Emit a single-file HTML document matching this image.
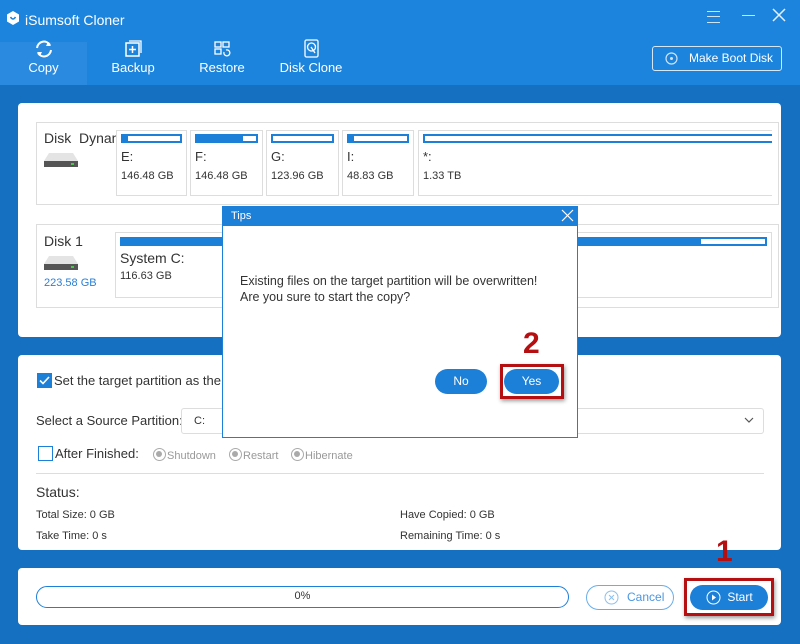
<!DOCTYPE html>
<html><head><meta charset="utf-8"><style>
*{margin:0;padding:0;box-sizing:border-box}
body{width:800px;height:644px;background:#1670c2;font-family:"Liberation Sans",sans-serif;position:relative;overflow:hidden;color:#333}
.abs{position:absolute}
.hdr{left:0;top:0;width:800px;height:85px;background:#1c84dc}
.tab{top:37px;height:48px;color:#fff;font-size:13px;text-align:center}
.panel{background:#fff;border-radius:4px}
.box{border:1px solid #ddd;background:#fff}
.pbox{border:1px solid #ddd;background:#fff}
.bar{border:2px solid #1c7fd8;height:9px;background:#fff}
.bar i{display:block;height:100%;background:#1c7fd8}
.lbl{font-size:13px;color:#333}
.sz{font-size:11px;color:#333}
.btn{background:#1c7fd8;color:#fff;border-radius:14px;font-size:12px;text-align:center}
.red{border:3px solid #b50f12;box-shadow:1px 2px 4px rgba(0,0,0,.4)}
.rnum{color:#b50f12;font-weight:bold;font-size:30px}
.rad{display:inline-block;width:13px;height:13px;border:1.5px solid #aaa;border-radius:50%;vertical-align:-2px;position:relative;margin-right:1px}
.rad:after{content:"";position:absolute;left:2px;top:2px;width:6px;height:6px;border-radius:50%;background:#aaa}
</style></head><body>
<div class="abs hdr"></div>
<div class="abs" style="left:0;top:42px;width:87px;height:43px;background:#2a8ae0"></div>
<svg class="abs" style="left:6px;top:10px" width="14" height="16" viewBox="0 0 14 16"><path d="M7 1L13 4.5V11.5L7 15L1 11.5V4.5Z" fill="#fff"/><path d="M4.5 7Q7 11 9.5 7" stroke="#1c84dc" stroke-width="1.6" fill="none"/></svg>
<div class="abs" style="left:25px;top:12px;color:#fff;font-size:14px">iSumsoft Cloner</div>
<div class="abs" style="left:707px;top:11px;width:13px;height:12px;border-top:1.5px solid #cfe3f7;border-bottom:1.5px solid #cfe3f7"><div style="margin-top:3.5px;border-top:1.5px solid #cfe3f7"></div></div>
<div class="abs" style="left:742px;top:15px;width:13px;border-top:1.5px solid #cfe3f7"></div>
<svg class="abs" style="left:772px;top:8px" width="14" height="14"><path d="M1 1L13 13M13 1L1 13" stroke="#e6f0fa" stroke-width="1.5"/></svg>
<div class="abs tab" style="left:0;width:87px"><svg width="22" height="20" viewBox="0 0 22 20" style="margin-top:2px"><path d="M4 9A7 7 0 0 1 17 6M18 11A7 7 0 0 1 5 14" stroke="#fff" stroke-width="2" fill="none"/><path d="M15 3L18 7L13 7Z M7 17L4 13L9 13Z" fill="#fff"/></svg><div style="margin-top:-2px;font-size:13px">Copy</div></div>
<div class="abs tab" style="left:93px;width:80px"><svg width="20" height="20" style="margin-top:2px"><rect x="3" y="4" width="13" height="13" stroke="#fff" fill="none" stroke-width="1.5"/><path d="M6 2H18V14" stroke="#fff" fill="none" stroke-width="1.3"/><path d="M9.5 7V14M6 10.5H13" stroke="#fff" stroke-width="1.5"/></svg><div style="margin-top:-2px">Backup</div></div>
<div class="abs tab" style="left:182px;width:80px"><svg width="20" height="20" style="margin-top:2px"><rect x="3" y="3" width="6" height="5" stroke="#fff" fill="none" stroke-width="1.3"/><rect x="11" y="3" width="6" height="5" stroke="#fff" fill="none" stroke-width="1.3"/><rect x="3" y="10" width="6" height="5" stroke="#fff" fill="none" stroke-width="1.3"/><path d="M12 13A3 3 0 1 0 14 11" stroke="#fff" fill="none" stroke-width="1.3"/></svg><div style="margin-top:-2px">Restore</div></div>
<div class="abs tab" style="left:276px;width:70px"><svg width="20" height="22" style="margin-top:1px"><rect x="4" y="2" width="13" height="17" rx="1.5" stroke="#fff" fill="none" stroke-width="1.3"/><circle cx="10.5" cy="9" r="4" stroke="#fff" fill="none" stroke-width="1.3"/><path d="M10 9L14 15" stroke="#fff" stroke-width="1.3"/></svg><div style="margin-top:-3px">Disk Clone</div></div>
<div class="abs" style="left:652px;top:46px;width:130px;height:25px;border:1px solid #d6e8f8;border-radius:3px;color:#fff;font-size:12px;line-height:23px;padding-left:36px">Make Boot Disk</div>
<svg class="abs" style="left:665px;top:52px" width="13" height="13"><circle cx="6.5" cy="6.5" r="5.5" stroke="#cfe3f7" fill="none" stroke-width="1.2"/><circle cx="6.5" cy="6.5" r="1.5" fill="#cfe3f7"/></svg>

<div class="abs panel" style="left:18px;top:103px;width:763px;height:234px"></div>
<div class="abs box" style="left:36px;top:122px;width:743px;height:83px"></div>
<div class="abs" style="left:44px;top:130px;font-size:14px;width:72px;overflow:hidden;white-space:nowrap">Disk&nbsp; Dynamic</div>
<svg class="abs" style="left:43px;top:151px" width="36" height="18"><path d="M6 2H30L35 10V16H1V10Z" fill="#e4e4e4"/><rect x="1" y="10" width="34" height="6" fill="#555"/><rect x="28" y="12" width="3" height="2" fill="#4c4"/></svg>
<div class="abs pbox" style="left:116px;top:130px;width:71px;height:66px"><div class="bar" style="margin:3px 4px"><i style="width:8%"></i></div><div class="lbl" style="margin-left:4px;margin-top:6px">E:</div><div class="sz" style="margin-left:4px;margin-top:6px">146.48 GB</div></div>
<div class="abs pbox" style="left:190px;top:130px;width:73px;height:66px"><div class="bar" style="margin:3px 4px"><i style="width:78%"></i></div><div class="lbl" style="margin-left:4px;margin-top:6px">F:</div><div class="sz" style="margin-left:4px;margin-top:6px">146.48 GB</div></div>
<div class="abs pbox" style="left:266px;top:130px;width:73px;height:66px"><div class="bar" style="margin:3px 4px"></div><div class="lbl" style="margin-left:4px;margin-top:6px">G:</div><div class="sz" style="margin-left:4px;margin-top:6px">123.96 GB</div></div>
<div class="abs pbox" style="left:342px;top:130px;width:72px;height:66px"><div class="bar" style="margin:3px 4px"><i style="width:8%"></i></div><div class="lbl" style="margin-left:4px;margin-top:6px">I:</div><div class="sz" style="margin-left:4px;margin-top:6px">48.83 GB</div></div>
<div class="abs pbox" style="left:418px;top:130px;width:354px;height:66px;border-right:none"><div class="bar" style="margin:3px 0 3px 4px;border-right:none"></div><div class="lbl" style="margin-left:4px;margin-top:6px">*:</div><div class="sz" style="margin-left:4px;margin-top:6px">1.33 TB</div></div>

<div class="abs box" style="left:36px;top:224px;width:743px;height:84px"></div>
<div class="abs" style="left:44px;top:233px;font-size:14px">Disk 1</div>
<svg class="abs" style="left:43px;top:254px" width="36" height="18"><path d="M6 2H30L35 10V16H1V10Z" fill="#e4e4e4"/><rect x="1" y="10" width="34" height="6" fill="#555"/><rect x="28" y="12" width="3" height="2" fill="#4c4"/></svg>
<div class="abs" style="left:44px;top:277px;font-size:11px;color:#2a7fd6">223.58 GB</div>
<div class="abs pbox" style="left:115px;top:232px;width:657px;height:66px"><div class="bar" style="margin:4px 4px"><i style="width:90%"></i></div><div class="lbl" style="margin-left:4px;margin-top:4px;font-size:14px">System C:</div><div class="sz" style="margin-left:4px;margin-top:4px">116.63 GB</div></div>

<div class="abs panel" style="left:18px;top:355px;width:763px;height:195px"></div>
<div class="abs" style="left:37px;top:373px;width:15px;height:15px;background:#1c7fd8"><svg width="15" height="15"><path d="M3 7.5L6 10.5L12 4" stroke="#fff" stroke-width="1.6" fill="none"/></svg></div>
<div class="abs" style="left:54px;top:373px;font-size:13px">Set the target partition as the boot disk</div>
<div class="abs" style="left:36px;top:413px;font-size:13px">Select a Source Partition:</div>
<div class="abs" style="left:181px;top:408px;width:583px;height:26px;border:1px solid #ddd;border-radius:3px;font-size:11px;line-height:24px;padding-left:12px">C:</div>
<svg class="abs" style="left:744px;top:417px" width="10" height="7"><path d="M1 1L5 5L9 1" stroke="#555" fill="none" stroke-width="1.2"/></svg>
<div class="abs" style="left:38px;top:446px;width:15px;height:15px;border:1.5px solid #1c7fd8"></div>
<div class="abs" style="left:55px;top:446px;font-size:13px">After Finished:</div>
<div class="abs" style="left:153px;top:448px;font-size:11px;color:#999"><span class="rad"></span>Shutdown</div>
<div class="abs" style="left:229px;top:448px;font-size:11px;color:#999"><span class="rad"></span>Restart</div>
<div class="abs" style="left:291px;top:448px;font-size:11px;color:#999"><span class="rad"></span>Hibernate</div>
<div class="abs" style="left:36px;top:473px;width:728px;border-top:1px solid #ddd"></div>
<div class="abs" style="left:36px;top:484px;font-size:14px">Status:</div>
<div class="abs" style="left:36px;top:509px;font-size:11px">Total Size: 0 GB</div>
<div class="abs" style="left:36px;top:530px;font-size:11px">Take Time: 0 s</div>
<div class="abs" style="left:400px;top:509px;font-size:11px">Have Copied: 0 GB</div>
<div class="abs" style="left:400px;top:530px;font-size:11px">Remaining Time: 0 s</div>

<div class="abs panel" style="left:18px;top:568px;width:763px;height:57px"></div>
<div class="abs" style="left:36px;top:586px;width:533px;height:22px;border:1.5px solid #1c7fd8;border-radius:11px;font-size:11px;text-align:center;line-height:19px">0%</div>
<div class="abs" style="left:586px;top:585px;width:88px;height:25px;border:1.5px solid #6aaee8;border-radius:13px;color:#4a97e0;font-size:12px;line-height:22px;padding-left:40px">Cancel</div>
<svg class="abs" style="left:604px;top:590px" width="15" height="15"><circle cx="7.5" cy="7.5" r="6.5" stroke="#8cc0ee" fill="none"/><path d="M5 5L10 10M10 5L5 10" stroke="#8cc0ee"/></svg>
<div class="abs btn" style="left:690px;top:585px;width:78px;height:25px;line-height:25px;padding-left:22px">Start</div>
<svg class="abs" style="left:706px;top:590px" width="15" height="15"><circle cx="7.5" cy="7.5" r="6.5" stroke="#fff" fill="none"/><path d="M6 4.5L10 7.5L6 10.5Z" fill="#fff"/></svg>
<div class="abs red" style="left:684px;top:578px;width:90px;height:38px"></div>
<div class="abs rnum" style="left:716px;top:535px">1</div>

<div class="abs" style="left:222px;top:206px;width:356px;height:232px;background:#fff;border:1px solid #1c7fd8"></div>
<div class="abs" style="left:222px;top:206px;width:356px;height:20px;background:#1c7fd8;color:#fff;font-size:11px;line-height:20px;padding-left:9px">Tips</div>
<svg class="abs" style="left:561px;top:209px" width="13" height="13"><path d="M1 1L12 12M12 1L1 12" stroke="#fff" stroke-width="1.2"/></svg>
<div class="abs" style="left:240px;top:273px;font-size:12.5px;line-height:16px">Existing files on the target partition will be overwritten!<br>Are you sure to start the copy?</div>
<div class="abs btn" style="left:435px;top:369px;width:52px;height:25px;line-height:25px">No</div>
<div class="abs btn" style="left:504px;top:369px;width:55px;height:25px;line-height:25px">Yes</div>
<div class="abs red" style="left:500px;top:364px;width:64px;height:35px"></div>
<div class="abs rnum" style="left:523px;top:327px">2</div>
</body></html>
